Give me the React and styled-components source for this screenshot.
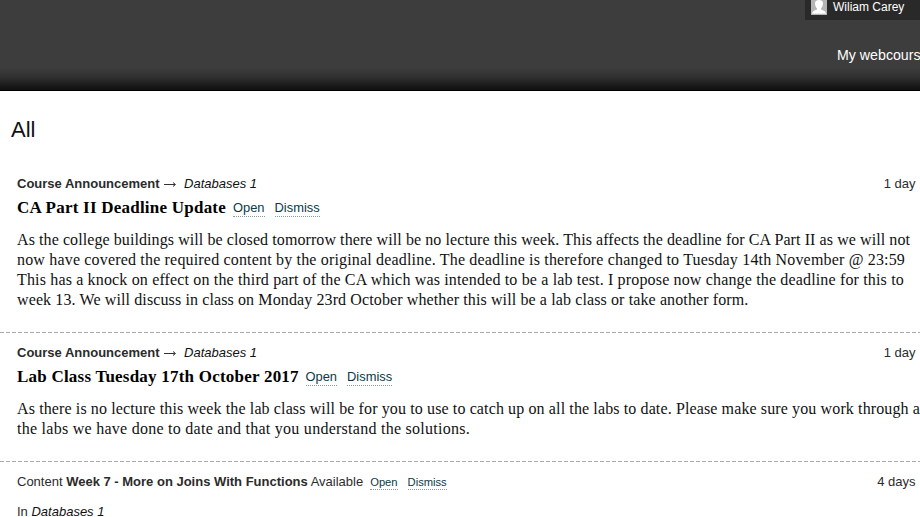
import React from 'react';
import styled, { createGlobalStyle } from 'styled-components';

const GlobalStyle = createGlobalStyle`
  * { box-sizing: border-box; }
  body {
    margin: 0;
    background: #fff;
    color: #2b2b2b;
    font-family: "Liberation Sans", Arial, sans-serif;
    font-size: 13px;
    overflow: hidden;
  }
`;

const Page = styled.div`
  width: 920px;
  height: 517px;
  overflow: hidden;
`;

const Header = styled.header`
  display: flex;
  flex-direction: column;
  align-items: flex-end;
  height: 91px;
  background: linear-gradient(#3d3d3d 0 68px, #303030 77px, #141414 88px, #111 90px, #000 90px);
  color: #fff;
`;

const UserBar = styled.div`
  display: flex;
  gap: 6px;
  width: 115px;
  height: 20px;
  padding-left: 6px;
  background: #292929;
  font-size: 12px;
  line-height: 14px;
`;

const Avatar = styled.svg`
  width: 16px;
  height: 15px;
`;

const NavItem = styled.a`
  width: 83px;
  margin-top: 26px;
  font-size: 14.2px;
  line-height: 18px;
  white-space: nowrap;
  overflow: hidden;
`;

const Heading = styled.h1`
  height: 74px;
  margin: 0;
  padding: 25px 11px 0;
  color: #111;
  font-size: 22px;
  font-weight: 400;
  line-height: 28px;
`;

const Item = styled.article`
  height: ${({ $height }) => $height}px;
  padding: ${({ $top = 10 }) => $top}px 0 0 17px;
`;

const Divider = styled.div`
  height: 1px;
  background: repeating-linear-gradient(90deg, #aaa 0 4px, transparent 4px 6px);
`;

const MetaRow = styled.div`
  display: flex;
  align-items: center;
  height: 20px;
  line-height: 20px;
  white-space: pre;
`;

const Age = styled.time`
  margin-left: auto;
  margin-right: 4.5px;
`;

const Arrow = styled.svg`
  width: 13px;
  height: 7px;
  margin: 1px 7.5px 0 4px;
`;

const Course = styled.em`
  color: #111;
`;

const TitleRow = styled.div`
  display: flex;
  align-items: center;
  height: 20px;
  margin-top: 4px;
`;

const Title = styled.h2`
  width: ${({ $width }) => $width}px;
  margin: 0 7px 0 0;
  color: #000;
  font: 700 17px/20px "Liberation Serif", Georgia, serif;
  letter-spacing: ${({ $spacing }) => $spacing}px;
  white-space: nowrap;
`;

const Actions = styled.span`
  display: flex;
  gap: 10px;
  margin-left: ${({ $small }) => ($small ? 7 : 0)}px;
  font-size: ${({ $small }) => ($small ? 11.2 : 12.9)}px;
  padding-top: ${({ $small }) => ($small ? 1 : 0)}px;
`;

const Action = styled.a`
  height: ${({ $small }) => ($small ? 14 : 17)}px;
  border-bottom: 1px dotted #8c9ba0;
  color: #0b3a48;
  line-height: ${({ $small }) => ($small ? 13 : 15)}px;
`;

const Body = styled.div`
  margin-top: 12px;
  color: #111;
  font: 16px/20px "Liberation Serif", Georgia, serif;
`;

const Line = styled.div`
  letter-spacing: ${({ $spacing }) => $spacing}px;
  white-space: nowrap;
`;

const Location = styled.div`
  margin-top: 10px;
  line-height: 20px;
`;

const announcements = [
  {
    title: 'CA Part II Deadline Update', width: 209, spacing: 0.23, height: 167, top: 9,
    lines: [
      ['As the college buildings will be closed tomorrow there will be no lecture this week. This affects the deadline for CA Part II as we will not', 0.083],
      ['now have covered the required content by the original deadline. The deadline is therefore changed to Tuesday 14th November @ 23:59', 0.175],
      ['This has a knock on effect on the third part of the CA which was intended to be a lab test. I propose now change the deadline for this to', 0.158],
      ['week 13. We will discuss in class on Monday 23rd October whether this will be a lab class or take another form.', 0.115],
    ],
  },
  {
    title: 'Lab Class Tuesday 17th October 2017', width: 281.5, spacing: 0.22, height: 128, top: 10,
    lines: [
      ['As there is no lecture this week the lab class will be for you to use to catch up on all the labs to date. Please make sure you work through a', 0.12],
      ['the labs we have done to date and that you understand the solutions.', 0.265],
    ],
  },
];

function ItemActions({ small }) {
  return (
    <Actions $small={small}>
      <Action $small={small}>Open</Action>
      <Action $small={small}>Dismiss</Action>
    </Actions>
  );
}

function Announcement({ title, width, spacing, height, top, lines }) {
  return (
    <>
      <Item $height={height} $top={top}>
        <MetaRow>
          <strong>Course Announcement</strong>
          <Arrow viewBox="0 0 13 7">
            <path d="M0 3.5h11M9 1.500L11.500 3.500 9 5.500" fill="none" stroke="#333" />
          </Arrow>
          <Course>Databases 1</Course>
          <Age>1 day</Age>
        </MetaRow>
        <TitleRow>
          <Title $width={width} $spacing={spacing}>{title}</Title>
          <ItemActions />
        </TitleRow>
        <Body>
          {lines.map(([text, gap]) => <Line key={text} $spacing={gap}>{text}</Line>)}
        </Body>
      </Item>
      <Divider />
    </>
  );
}

export default function App() {
  return (
    <Page>
      <GlobalStyle />
      <Header>
        <UserBar>
          <Avatar viewBox="0 0 16 15">
            <path d="M0 0h16v15H0z" fill="#b5b5b5" />
            <path d="M4 3C4-1 12-1 12 3c0 2.500-.8 4.300-2 5.500v1c1.900.9 4.400 1.100 5 4.200H1c.6-3.100 3.100-3.300 5-4.200v-1C4.800 7.300 4 5.500 4 3z" fill="#fff" />
          </Avatar>
          Wiliam Carey
        </UserBar>
        <NavItem>My webcours</NavItem>
      </Header>
      <Heading>All</Heading>
      <main>
        {announcements.map((item) => <Announcement key={item.title} {...item} />)}
        <Item $height={55}>
          <MetaRow>
            <span>Content <strong>Week 7 - More on Joins With Functions</strong> Available</span>
            <ItemActions small />
            <Age>4 days</Age>
          </MetaRow>
          <Location>In <Course>Databases 1</Course></Location>
        </Item>
      </main>
    </Page>
  );
}
